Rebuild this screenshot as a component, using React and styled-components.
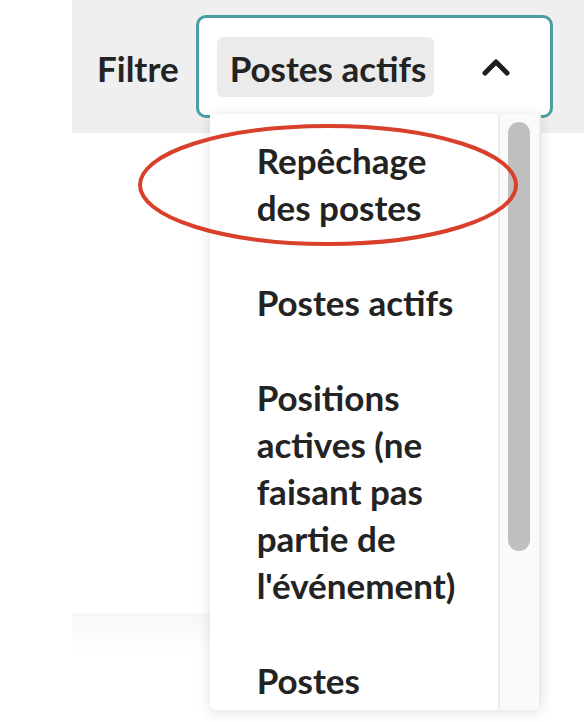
import React from "react";
import styled, { createGlobalStyle } from "styled-components";

const GlobalStyle = createGlobalStyle`
  body {
    margin: 0;
    background: #ffffff;
    font-family: Lato, "Open Sans", sans-serif;
    color: #232323;
  }
`;

const Page = styled.div`
  width: 584px;
  height: 722px;
  overflow: hidden;
  padding-left: 72px;
  box-sizing: border-box;
  position: relative;
`;

const Header = styled.div`
  display: flex;
  align-items: center;
  gap: 17px;
  height: 133px;
  padding: 0 0 0 25px;
  box-sizing: border-box;
  background: #efefef;
`;

const Label = styled.span`
  font-size: 35px;
  font-weight: 700;
  color: #232323;
  padding-top: 2px;
  flex-shrink: 0;
`;

const SelectWrap = styled.div`
  position: relative;
  width: 357px;
  flex-shrink: 0;
`;

const SelectBox = styled.div`
  display: flex;
  align-items: center;
  justify-content: space-between;
  height: 103px;
  box-sizing: border-box;
  border: 3px solid #4b9ea0;
  border-radius: 10px;
  background: #ffffff;
  padding: 0 40px 0 18px;
`;

const Chip = styled.span`
  display: flex;
  align-items: center;
  height: 60px;
  padding: 2px 7px 0 13px;
  box-sizing: border-box;
  border-radius: 6px;
  background: #ebebeb;
  font-size: 35px;
  font-weight: 700;
  white-space: nowrap;
`;

const Menu = styled.div`
  position: absolute;
  top: 99px;
  left: 14px;
  width: 331px;
  height: 596px;
  display: flex;
  background: #ffffff;
  border-radius: 0 0 6px 6px;
  box-shadow: 0 2px 14px rgba(0, 0, 0, 0.13);
  overflow: hidden;
  z-index: 2;
`;

const List = styled.ul`
  list-style: none;
  margin: -1px 0 0;
  padding: 0 26px 0 47px;
  flex: 1;
`;

const Item = styled.li`
  padding: 24px 0;
  font-size: 35px;
  font-weight: 700;
  line-height: 47px;
  color: #232323;
`;

const Track = styled.div`
  width: 39px;
  display: flex;
  justify-content: center;
  padding-top: 8px;
  background: #fafafa;
  border-left: 2px solid #ececec;
  border-right: 2px solid #ececec;
`;

const Thumb = styled.div`
  width: 22px;
  height: 429px;
  border-radius: 11px;
  background: #bfbfbf;
`;

const Lower = styled.div`
  margin-top: 480px;
  width: 138px;
  height: 120px;
  background: linear-gradient(180deg, #f7f7f7 0%, #ffffff 35%);
`;

const Circle = styled.svg`
  position: absolute;
  left: 136px;
  top: 122px;
  overflow: visible;
  z-index: 3;
`;

function Chevron() {
  return (
    <svg width="28" height="18" viewBox="0 0 28 18">
      <path
        d="M3 15 L14 4 L25 15"
        fill="none"
        stroke="#1e1e1e"
        strokeWidth="5"
        strokeLinecap="round"
        strokeLinejoin="round"
      />
    </svg>
  );
}

const options = [
  "Repêchage des postes",
  "Postes actifs",
  "Positions actives (ne faisant pas partie de l'événement)",
  "Postes associés",
];

export default function App() {
  return (
    <>
      <GlobalStyle />
      <Page>
        <Header>
          <Label>Filtre</Label>
          <SelectWrap>
            <SelectBox>
              <Chip>Postes actifs</Chip>
              <Chevron />
            </SelectBox>
            <Menu>
              <List>
                {options.map((o) => (
                  <Item key={o}>{o}</Item>
                ))}
              </List>
              <Track>
                <Thumb />
              </Track>
            </Menu>
          </SelectWrap>
        </Header>
        <Lower />
        <Circle width="384" height="126">
          <ellipse cx="192" cy="63" rx="188" ry="59" fill="none" stroke="#d8402b" strokeWidth="4" />
        </Circle>
      </Page>
    </>
  );
}
